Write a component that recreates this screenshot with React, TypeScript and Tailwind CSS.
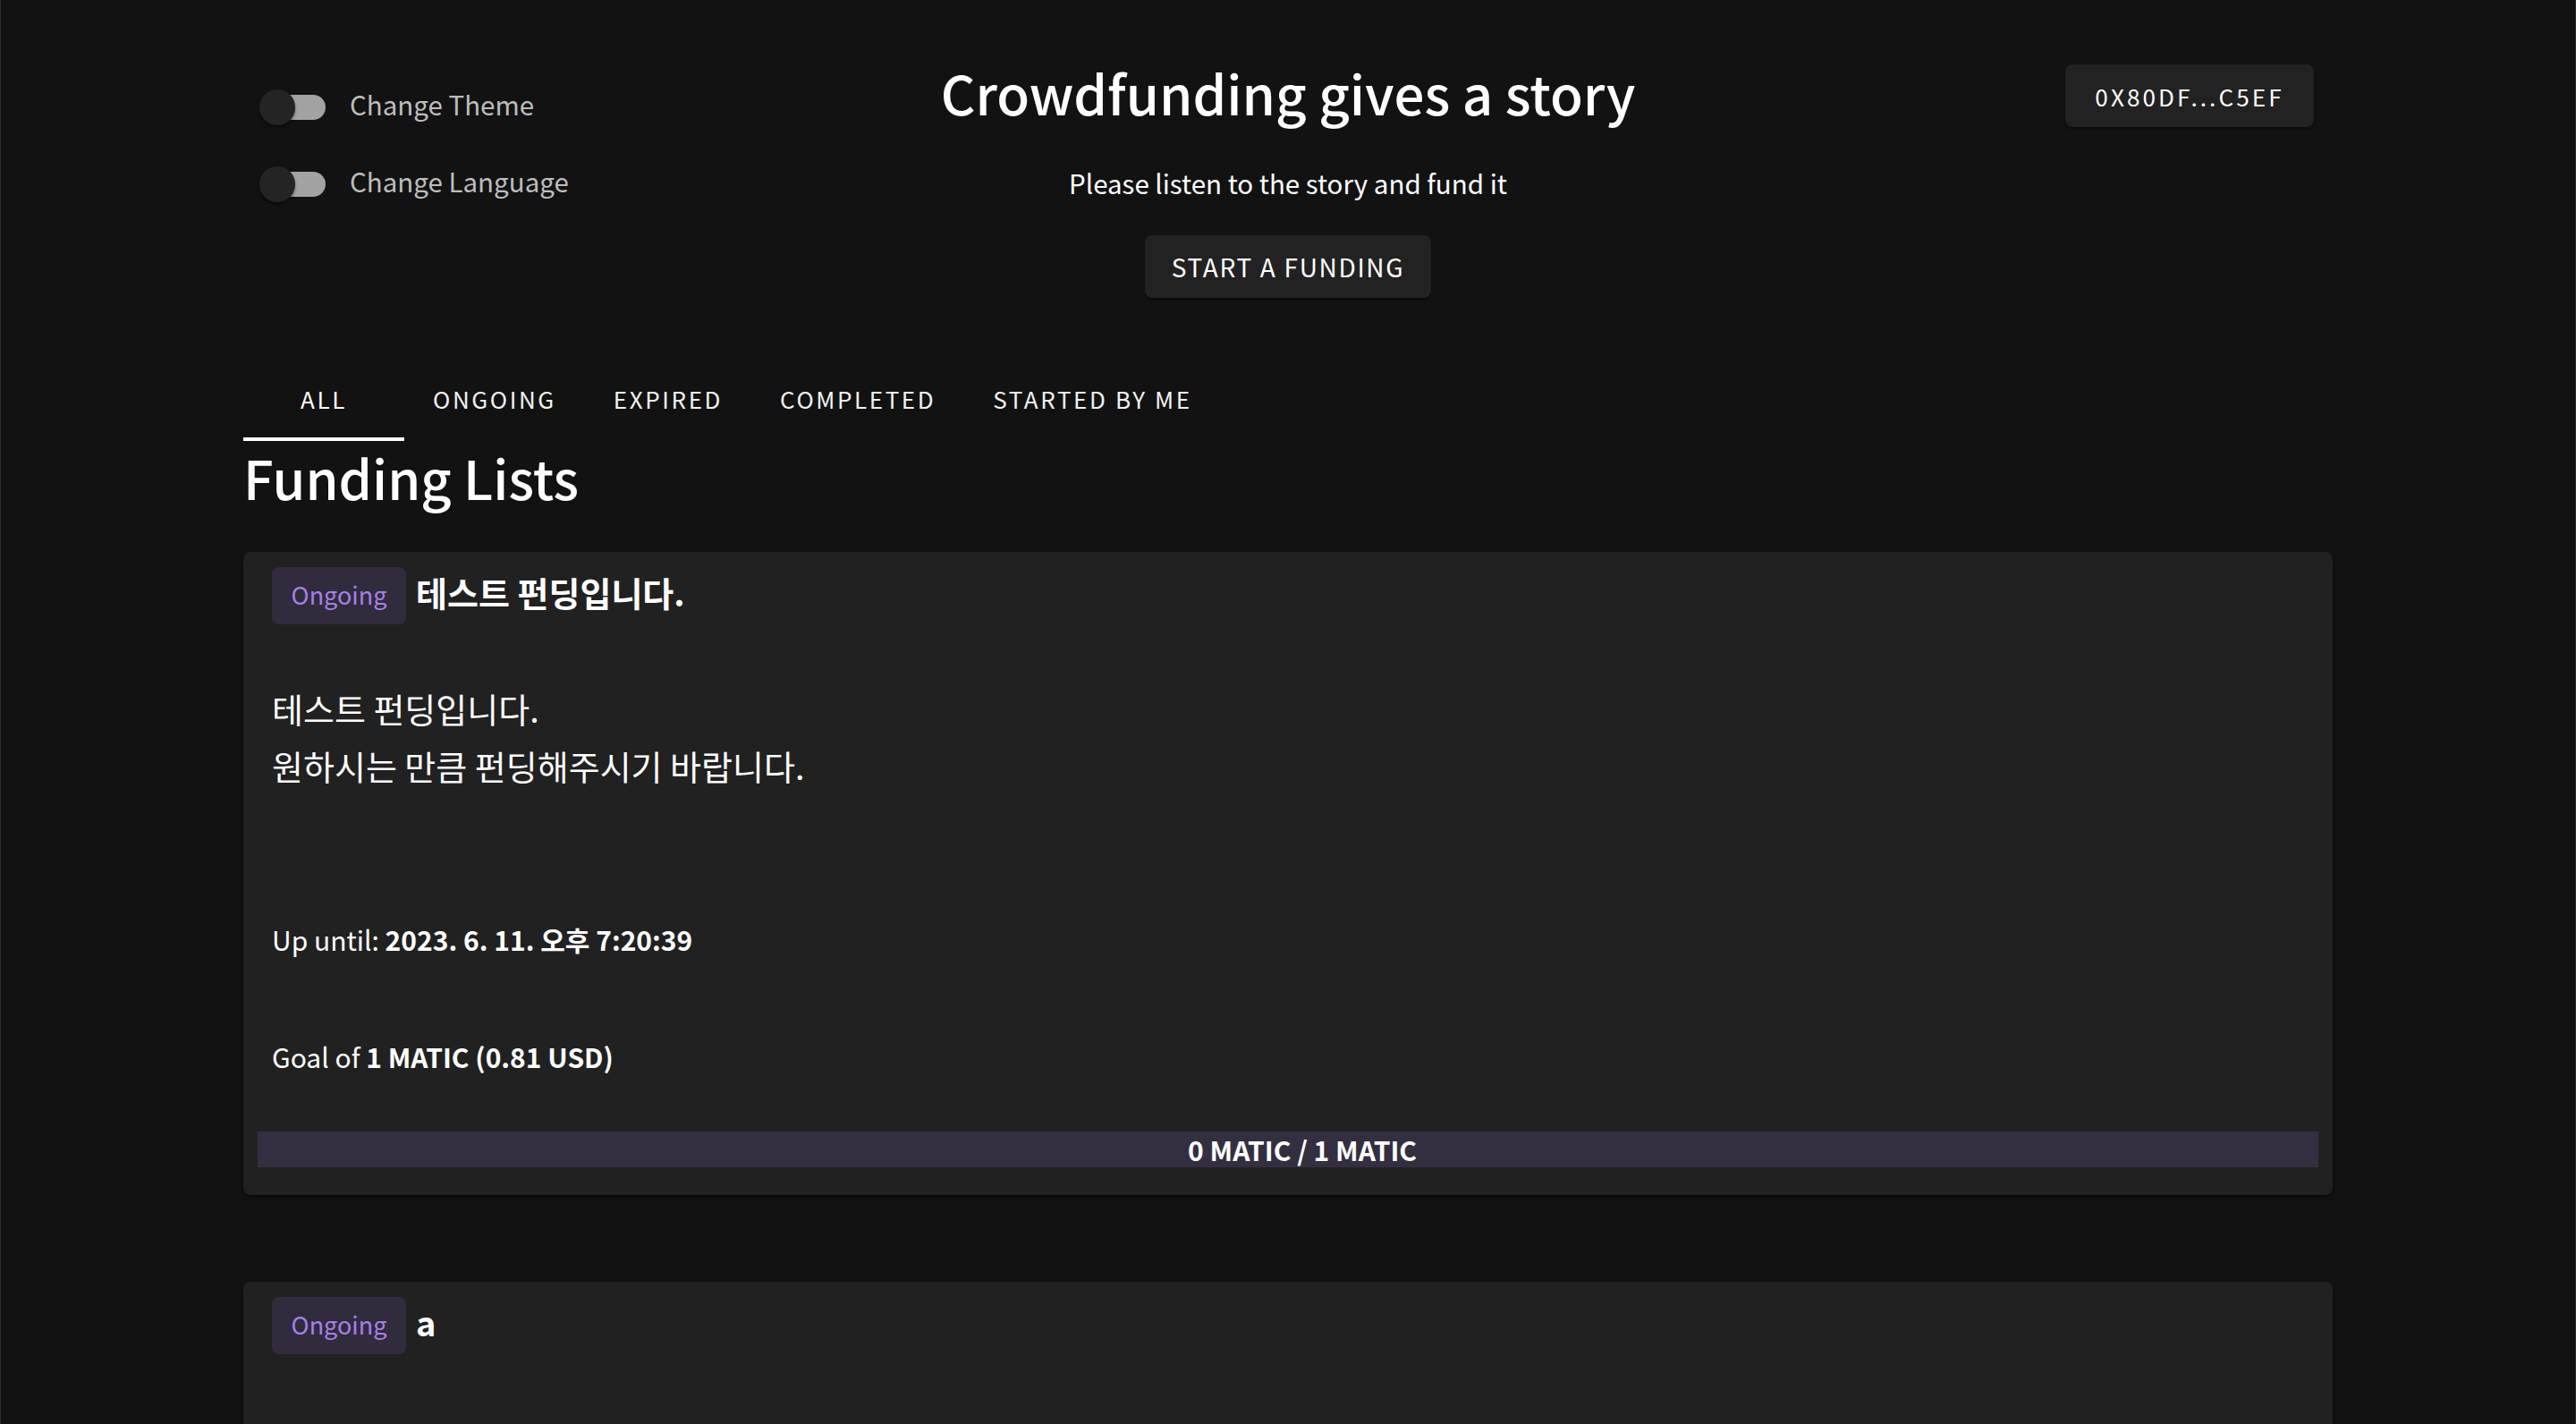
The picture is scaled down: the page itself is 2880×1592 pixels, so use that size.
import React from "react";

const tabs = ["ALL", "ONGOING", "EXPIRED", "COMPLETED", "STARTED BY ME"];

function Toggle({ label }: { label: string }) {
  return (
    <div className="flex items-center h-[76px]">
      <div className="relative w-[116px] h-[76px] shrink-0">
        <div className="absolute left-[24px] top-[24px] w-[68px] h-[28px] rounded-full bg-[#a3a3a3]" />
        <div className="absolute left-[18px] top-[18px] w-[40px] h-[40px] rounded-full bg-[#242424] shadow-[0_2px_3px_rgba(0,0,0,0.5)]" />
      </div>
      <span className="pl-[3px] pb-[8px] text-[29.5px] text-[#bdbdbd]">{label}</span>
    </div>
  );
}

function FundingCard({
  title,
  children,
}: {
  title: string;
  children?: React.ReactNode;
}) {
  return (
    <div className="bg-[#212121] rounded-lg shadow-[0_3px_4px_rgba(0,0,0,0.45)] pt-4">
      <div className="flex items-center gap-[11px] px-8">
        <span className="h-16 w-[150px] flex items-center justify-center rounded-lg bg-[#302b3d] text-[#a97fe6] text-[27px]">
          Ongoing
        </span>
        <span className="text-[38px] font-bold text-white pb-[8px]">{title}</span>
      </div>
      {children}
    </div>
  );
}

export default function App() {
  return (
    <div className="h-[1592px] overflow-hidden bg-[#121212] border-x border-[#2c2c2c] text-white font-['Noto_Sans_CJK_KR',sans-serif]">
      <div className="w-[2336px] mx-auto">
        {/* header */}
        <div className="grid grid-cols-[1fr_auto_1fr]">
          <div className="flex flex-col gap-[10px] pt-[82px]">
            <Toggle label="Change Theme" />
            <Toggle label="Change Language" />
          </div>
          <div className="flex flex-col items-center pt-[66px]">
            <h1 className="text-[60px] leading-[74px] font-medium">
              Crowdfunding gives a story
            </h1>
            <p className="mt-[43px] text-[29.5px] leading-[42px]">
              Please listen to the story and fund it
            </p>
            <button className="mt-[38px] w-[320px] h-[70px] rounded-lg bg-[#222222] text-[28px] tracking-[0.06em] shadow-[0_2px_3px_rgba(0,0,0,0.4)]">
              START A FUNDING
            </button>
          </div>
          <div className="flex justify-end items-start pt-[72px] pr-[21px]">
            <button className="h-[70px] w-[278px] rounded-lg bg-[#222222] text-[26px] tracking-[0.12em] shadow-[0_2px_3px_rgba(0,0,0,0.4)]">
              0X80DF...C5EF
            </button>
          </div>
        </div>

        {/* tabs */}
        <div className="flex mt-[64px] h-[96px]">
          {tabs.map((t, i) => (
            <div
              key={t}
              className={`relative min-w-[180px] px-8 flex items-center justify-center text-[26px] tracking-[0.1em] ${
                i === 0 ? "text-white" : "text-[#f2f2f2]"
              }`}
            >
              {t}
              {i === 0 && (
                <span className="absolute left-0 right-0 bottom-0 h-[4px] bg-white" />
              )}
            </div>
          ))}
        </div>

        <h2 className="text-[59.5px] leading-[73px] font-medium pt-[4px]">Funding Lists</h2>

        <div className="mt-[47px] flex flex-col gap-[97px]">
          <FundingCard title="테스트 펀딩입니다.">
            <div className="px-8 pt-[62px] text-[38px] leading-[64px]">
              <p>테스트 펀딩입니다.</p>
              <p>원하시는 만큼 펀딩해주시기 바랍니다.</p>
            </div>
            <div className="px-8 pt-[140px] text-[30px] leading-[45px]">
              Up until: <span className="font-semibold">2023. 6. 11. 오후 7:20:39</span>
            </div>
            <div className="px-8 pt-[86px] text-[30px] leading-[45px]">
              Goal of <span className="font-semibold">1 MATIC (0.81 USD)</span>
            </div>
            <div className="mx-4 mt-[61px] mb-[31px] h-[40px] bg-[#332f40] flex items-center justify-center pl-8 text-[30px] font-bold">
              0 MATIC / 1 MATIC
            </div>
          </FundingCard>
          <FundingCard title="a">
            <div className="h-[300px]" />
          </FundingCard>
        </div>
      </div>
    </div>
  );
}
